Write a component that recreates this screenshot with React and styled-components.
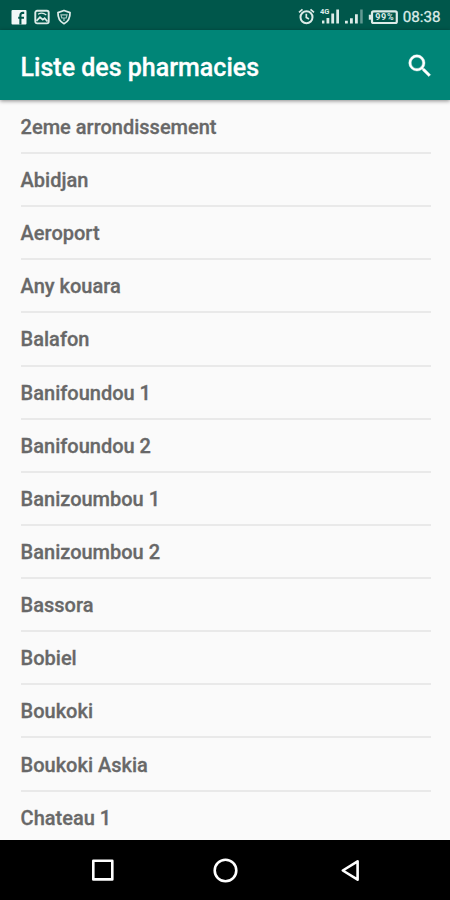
import React from 'react';
import styled, { createGlobalStyle } from 'styled-components';

const GlobalStyle = createGlobalStyle`
  body {
    margin: 0;
    font-family: Roboto, sans-serif;
    background: #fafafa;
  }
`;

const Screen = styled.div`
  display: flex;
  flex-direction: column;
  width: 450px;
  height: 900px;
  overflow: hidden;
  background: #fafafa;
`;

const StatusBar = styled.div`
  display: flex;
  align-items: center;
  justify-content: space-between;
  flex: none;
  box-sizing: border-box;
  height: 30px;
  padding: 3px 9.5px 0 11px;
  background: #00574b;
  color: #dcebe8;
`;

const StatusGroup = styled.div`
  display: flex;
  align-items: center;
  gap: ${(props) => props.$gap}px;
`;

const Clock = styled.span`
  font-size: 15.2px;
  line-height: 20px;
  font-weight: 400;
  -webkit-text-stroke: 0.3px currentColor;
  padding-top: 1px;
`;

const Icon = styled.svg`
  display: block;
  flex: none;
`;

const AppBar = styled.header`
  display: flex;
  align-items: center;
  justify-content: space-between;
  flex: none;
  box-sizing: border-box;
  height: 70px;
  padding: 2px 14.8px 0 20.6px;
  background: #008577;
  color: #fff;
  box-shadow: 0 1px 4px rgba(0, 0, 0, 0.45);
  z-index: 1;
`;

const Title = styled.h1`
  margin: 0;
  padding-top: 4px;
  font-size: 25px;
  line-height: 30px;
  font-weight: 500;
  -webkit-text-stroke: 0.3px currentColor;
`;

const SearchButton = styled.button`
  padding: 0;
  border: 0;
  background: none;
  color: inherit;
`;

const List = styled.ul`
  flex: 1;
  min-height: 0;
  margin: 0;
  padding: 0.8px 19px 0 20.6px;
  overflow: hidden;
  list-style: none;
`;

const Item = styled.li`
  box-sizing: border-box;
  height: 53.15px;
  padding-top: 13.1px;
  border-bottom: 2px solid #e9e9e9;
  color: #686868;
  font-size: 20px;
  line-height: 27px;
  font-weight: 500;
  -webkit-text-stroke: 0.3px currentColor;
`;

const NavBar = styled.nav`
  display: flex;
  justify-content: space-between;
  align-items: center;
  flex: none;
  box-sizing: border-box;
  height: 60px;
  padding: 0 86px 0 89px;
  background: #000;
`;

const FacebookIcon = () => (
  <Icon width="16" height="16" viewBox="0 0 16 16">
    <rect x="0.5" y="1" width="15" height="14.5" rx="1" fill="#f2f8f7" />
    <path d="M9.4 15.5V6.2C9.4 4.6 10.3 3.9 11.7 3.9H13.2M7.2 8.7H13" fill="none" stroke="#00574b" strokeWidth="2.1" />
  </Icon>
);

const PictureIcon = () => (
  <Icon width="16" height="16" viewBox="0 0 16 16" fill="none" stroke="currentColor">
    <rect x="1.3" y="1.8" width="13.4" height="12.6" rx="1.8" strokeWidth="1.9" />
    <path d="M2.5 11.8 6 8.2 8.8 10.6 10.6 9.2 13.5 12.5" strokeWidth="1.8" />
    <path d="M4 5.2C6.5 3.8 10 4 12.3 6" strokeWidth="1.1" />
  </Icon>
);

const ShieldIcon = () => (
  <Icon width="16" height="16" viewBox="0 0 16 16" fill="none" stroke="currentColor">
    <path d="M8 1.5 14 3.6C14.2 9 12.3 12.6 8 14.7 3.7 12.6 1.8 9 2 3.6Z" strokeWidth="1.8" strokeLinejoin="round" />
    <path d="M5 5.8H11L10.2 9H5.8ZM8 9V12" strokeWidth="1.2" opacity="0.75" />
  </Icon>
);

const AlarmIcon = () => (
  <Icon width="17" height="17" viewBox="0 0 17 17" fill="none" stroke="currentColor">
    <circle cx="8.5" cy="9.2" r="6" strokeWidth="2" />
    <path d="M1 4.4 4.5 1.4M12.5 1.4 16 4.4M8.3 5.8V9.5L11 11" strokeWidth="1.7" />
  </Icon>
);

const NetworkLabel = styled.text`
  font-size: 7.5px;
  font-weight: 700;
`;

const Signal4GIcon = () => (
  <Icon width="20" height="18" viewBox="0 0 20 18" fill="currentColor">
    <NetworkLabel x="0" y="6">4G</NetworkLabel>
    <path d="M2 12.5H4.4V15.5H2ZM6.5 10H9.3V15.5H6.5ZM11.3 5.5H14.1V15.5H11.3ZM16.3 1.5H19V15.5H16.3Z" />
  </Icon>
);

const SignalIcon = () => (
  <Icon width="18" height="18" viewBox="0 0 18 18" fill="currentColor">
    <path d="M0 12.8H2.8V15.5H0ZM5 10.3H7.8V15.5H5ZM10 6.2H12.8V15.5H10Z" />
    <path d="M15.2 1.5H17.7V15.5H15.2Z" opacity="0.45" />
  </Icon>
);

const BatteryLabel = styled.text`
  font-size: 9px;
  font-weight: 700;
`;

const BatteryIcon = () => (
  <Icon width="30" height="16" viewBox="0 0 30 16" fill="none" stroke="currentColor">
    <rect x="4" y="2.4" width="24.8" height="11.6" rx="1.5" strokeWidth="2.2" />
    <path d="M2 5.7V10.7" strokeWidth="2.4" />
    <BatteryLabel x="7.2" y="11.4" textLength="18.4" fill="currentColor" stroke="none">99%</BatteryLabel>
  </Icon>
);

const SearchIcon = () => (
  <Icon width="30" height="30" viewBox="0 0 24 24" fill="currentColor" stroke="currentColor" strokeWidth="0.3">
    <path d="M15.5 14h-.79l-.28-.27A6.471 6.471 0 0 0 16 9.5 6.5 6.5 0 1 0 9.5 16c1.61 0 3.09-.59 4.23-1.57l.27.28v.79l5 4.99L20.49 19l-4.99-5zm-6 0C7.01 14 5 11.99 5 9.5S7.01 5 9.5 5 14 7.01 14 9.5 11.99 14 9.5 14z" />
  </Icon>
);

const NavIcon = ({ children }) => (
  <Icon width="28" height="28" viewBox="0 0 28 28" fill="none" stroke="#fff" strokeWidth="2.6" strokeLinejoin="round">
    {children}
  </Icon>
);

const pharmacies = [
  '2eme arrondissement',
  'Abidjan',
  'Aeroport',
  'Any kouara',
  'Balafon',
  'Banifoundou 1',
  'Banifoundou 2',
  'Banizoumbou 1',
  'Banizoumbou 2',
  'Bassora',
  'Bobiel',
  'Boukoki',
  'Boukoki Askia',
  'Chateau 1',
];

const App = () => (
  <>
    <GlobalStyle />
    <Screen>
      <StatusBar>
        <StatusGroup $gap={6.5}>
          <FacebookIcon />
          <PictureIcon />
          <ShieldIcon />
        </StatusGroup>
        <StatusGroup $gap={5}>
          <AlarmIcon />
          <Signal4GIcon />
          <SignalIcon />
          <BatteryIcon />
          <Clock>08:38</Clock>
        </StatusGroup>
      </StatusBar>
      <AppBar>
        <Title>Liste des pharmacies</Title>
        <SearchButton aria-label="Rechercher">
          <SearchIcon />
        </SearchButton>
      </AppBar>
      <List>
        {pharmacies.map((name) => (
          <Item key={name}>{name}</Item>
        ))}
      </List>
      <NavBar>
        <NavIcon>
          <rect x="4.3" y="4.8" width="19" height="18.6" />
        </NavIcon>
        <NavIcon>
          <circle cx="12.5" cy="14.5" r="10.8" />
        </NavIcon>
        <NavIcon>
          <path d="M6.8 14.5 21.6 5.3V23.7Z" />
        </NavIcon>
      </NavBar>
    </Screen>
  </>
);

export default App;
